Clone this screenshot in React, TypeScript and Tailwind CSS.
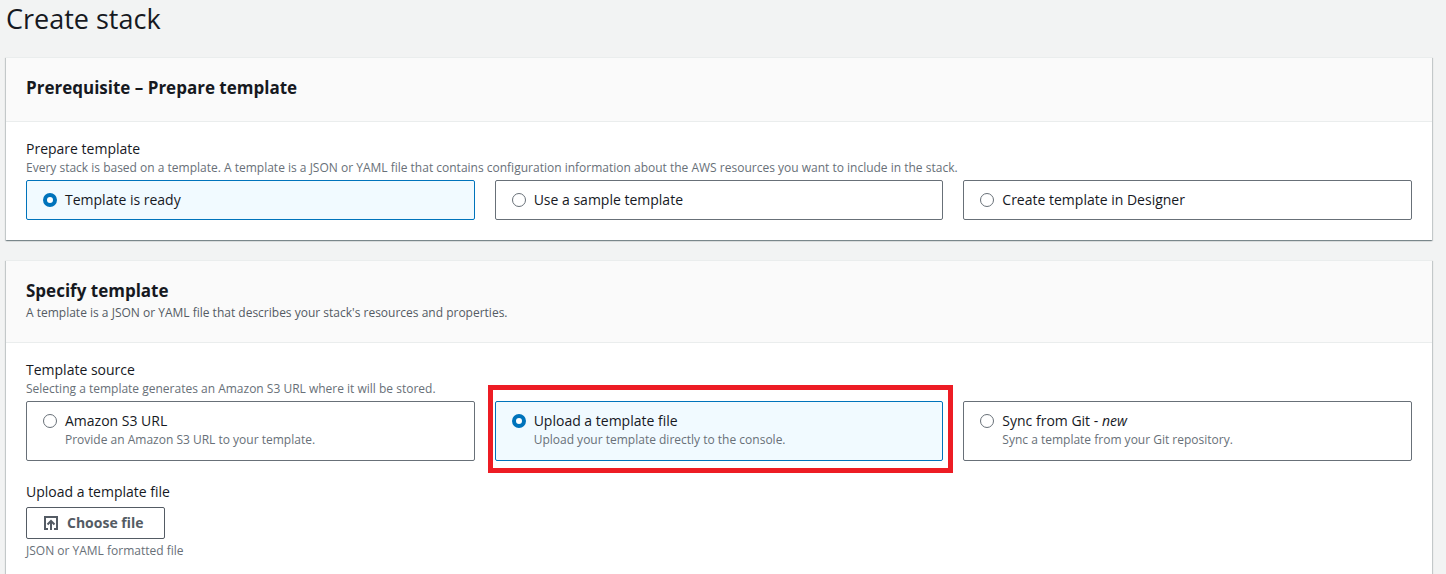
import { useId, useRef, useState, type ReactNode } from "react";

interface TileOption {
  value: string;
  label: ReactNode;
  description?: string;
  highlighted?: boolean;
}

interface TilesProps {
  name: string;
  label: string;
  description: string;
  options: TileOption[];
  initial: string;
}

function Tiles({ name, label, description, options, initial }: TilesProps) {
  const [value, setValue] = useState(initial);
  const id = useId();
  return (
    <div role="radiogroup" aria-labelledby={id + "-label"} aria-describedby={id + "-desc"}>
      <div id={id + "-label"} className="text-sm leading-[22px]">
        {label}
      </div>
      <p id={id + "-desc"} className="text-xs leading-4 text-[#687078]">
        {description}
      </p>
      <div className="mt-1 grid grid-cols-3 gap-5">
        {options.map((option) => {
          const checked = option.value === value;
          return (
            <div key={option.value} className="relative grid">
              <label
                className={
                  checked
                    ? "flex cursor-pointer gap-2 rounded-xs border border-[#0073bb] bg-[#f1faff] px-4 py-2"
                    : "flex cursor-pointer gap-2 rounded-xs border border-[#687078] bg-white px-4 py-2"
                }
              >
                <input
                  type="radio"
                  name={name}
                  value={option.value}
                  checked={checked}
                  onChange={() => setValue(option.value)}
                  className="mt-1 size-3.5 shrink-0 appearance-none rounded-full border border-[#687078] bg-white checked:border-4 checked:border-[#0073bb]"
                />
                <span className="block">
                  <span className="block text-sm leading-[22px]">{option.label}</span>
                  {option.description && (
                    <span className="block pb-1 text-xs leading-4 text-[#687078]">{option.description}</span>
                  )}
                </span>
              </label>
              {option.highlighted && (
                <div className="pointer-events-none absolute -top-4 -right-2.5 -bottom-3 -left-[7px] border-5 border-[#ed1c24]" />
              )}
            </div>
          );
        })}
      </div>
    </div>
  );
}

interface PanelProps {
  title: string;
  description?: string;
  children: ReactNode;
}

function Panel({ title, description, children }: PanelProps) {
  return (
    <section className="border-t border-[#eaeded] bg-white shadow-[0_1px_1px_0_rgba(0,28,36,0.3),1px_1px_1px_0_rgba(0,28,36,0.15),-1px_1px_1px_0_rgba(0,28,36,0.15)]">
      <header className="border-b border-[#eaeded] bg-[#fafafa] px-5 pt-[18px] pb-[21px]">
        <h2 className="text-[17px] leading-6 font-bold">{title}</h2>
        {description && <p className="mt-0.5 text-xs leading-4 text-[#545b64]">{description}</p>}
      </header>
      <div className="flex flex-col gap-5 px-5 pt-4 pb-5">{children}</div>
    </section>
  );
}

function UploadIcon() {
  return (
    <svg viewBox="0 0 16 16" className="size-4" fill="none" stroke="currentColor" strokeWidth="2" aria-hidden="true">
      <path d="M5 14H2V2h12v12h-3" />
      <path d="M8 15V6" />
      <path d="M4.5 9.5 8 6l3.5 3.5" />
    </svg>
  );
}

function FileUpload() {
  const inputRef = useRef<HTMLInputElement>(null);
  return (
    <div>
      <label htmlFor="template-file" className="block text-sm leading-[22px]">
        Upload a template file
      </label>
      <input ref={inputRef} id="template-file" type="file" accept=".json,.yaml,.yml" className="hidden" />
      <button
        type="button"
        onClick={() => inputRef.current?.click()}
        className="mt-1 flex h-8 items-center gap-2 rounded-xs border border-[#545b64] bg-white pr-5 pl-4 text-sm font-bold text-[#545b64]"
      >
        <UploadIcon />
        Choose file
      </button>
      <p className="mt-1 text-xs leading-4 text-[#687078]">JSON or YAML formatted file</p>
    </div>
  );
}

export default function App() {
  return (
    <main className="min-h-screen bg-[#f2f3f3] pt-px pr-3.5 pl-1.5 font-['Open_Sans','Noto_Sans',sans-serif] text-[#16191f]">
      <h1 className="pb-5 text-[27px] leading-9">Create stack</h1>
      <div className="flex flex-col gap-5">
        <Panel title="Prerequisite – Prepare template">
          <Tiles
            name="prepare"
            label="Prepare template"
            description="Every stack is based on a template. A template is a JSON or YAML file that contains configuration information about the AWS resources you want to include in the stack."
            initial="ready"
            options={[
              { value: "ready", label: "Template is ready" },
              { value: "sample", label: "Use a sample template" },
              { value: "designer", label: "Create template in Designer" },
            ]}
          />
        </Panel>
        <Panel
          title="Specify template"
          description="A template is a JSON or YAML file that describes your stack's resources and properties."
        >
          <Tiles
            name="source"
            label="Template source"
            description="Selecting a template generates an Amazon S3 URL where it will be stored."
            initial="upload"
            options={[
              { value: "s3", label: "Amazon S3 URL", description: "Provide an Amazon S3 URL to your template." },
              {
                value: "upload",
                label: "Upload a template file",
                description: "Upload your template directly to the console.",
                highlighted: true,
              },
              {
                value: "git",
                label: (
                  <>
                    Sync from Git - <em>new</em>
                  </>
                ),
                description: "Sync a template from your Git repository.",
              },
            ]}
          />
          <FileUpload />
        </Panel>
      </div>
    </main>
  );
}
